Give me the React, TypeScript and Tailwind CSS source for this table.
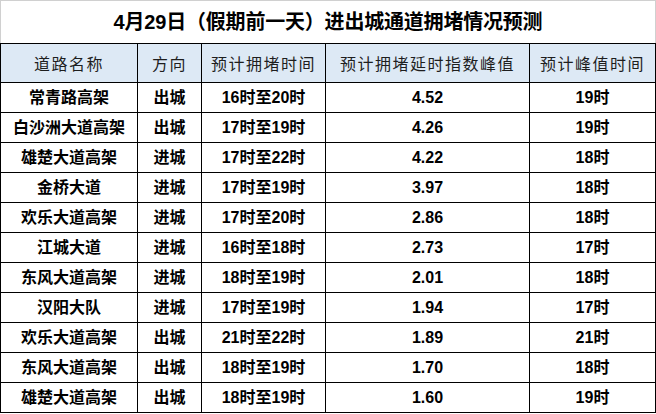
import React from "react";

const ROWS = [
  ["常青路高架", "出城", "16时至20时", "4.52", "19时"],
  ["白沙洲大道高架", "出城", "17时至19时", "4.26", "19时"],
  ["雄楚大道高架", "进城", "17时至22时", "4.22", "18时"],
  ["金桥大道", "进城", "17时至19时", "3.97", "18时"],
  ["欢乐大道高架", "进城", "17时至20时", "2.86", "18时"],
  ["江城大道", "进城", "16时至18时", "2.73", "17时"],
  ["东风大道高架", "进城", "18时至19时", "2.01", "18时"],
  ["汉阳大队", "进城", "17时至19时", "1.94", "17时"],
  ["欢乐大道高架", "出城", "21时至22时", "1.89", "21时"],
  ["东风大道高架", "出城", "18时至19时", "1.70", "18时"],
  ["雄楚大道高架", "出城", "18时至19时", "1.60", "19时"],
];

const HEADERS = ["道路名称", "方向", "预计拥堵时间", "预计拥堵延时指数峰值", "预计峰值时间"];

export default function App() {
  return (
    <div className="w-[656px] h-[414px] bg-white overflow-hidden font-['Liberation_Sans','Noto_Sans_CJK_SC',sans-serif] text-black">
      {/* title */}
      <div className="h-[43px] border-t border-l border-r border-[#d0d0d0] flex items-center justify-center">
        <h1 className="text-[20px] font-bold leading-none tracking-[-0.2px]">
          4月29日（假期前一天）进出城通道拥堵情况预测
        </h1>
      </div>

      {/* table */}
      <table className="w-[655px] table-fixed border-collapse">
        <colgroup>
          <col className="w-[137px]" />
          <col className="w-[64px]" />
          <col className="w-[124px]" />
          <col className="w-[204px]" />
          <col className="w-[126px]" />
        </colgroup>
        <thead>
          <tr className="h-[39px] bg-[#dde9f5]">
            {HEADERS.map((h) => (
              <th
                key={h}
                className="border border-black p-0 text-center text-[16px] font-normal leading-none tracking-[1.5px] text-[#1e1e1e] font-['Noto_Sans_CJK_SC',sans-serif]"
              >
                {h}
              </th>
            ))}
          </tr>
        </thead>
        <tbody>
          {ROWS.map((r, i) => (
            <tr key={i} className="h-[30px]">
              {r.map((c, j) => (
                <td
                  key={j}
                  className="border border-black p-0 text-center text-[16px] font-bold leading-none"
                >
                  {c}
                </td>
              ))}
            </tr>
          ))}
        </tbody>
      </table>
    </div>
  );
}
